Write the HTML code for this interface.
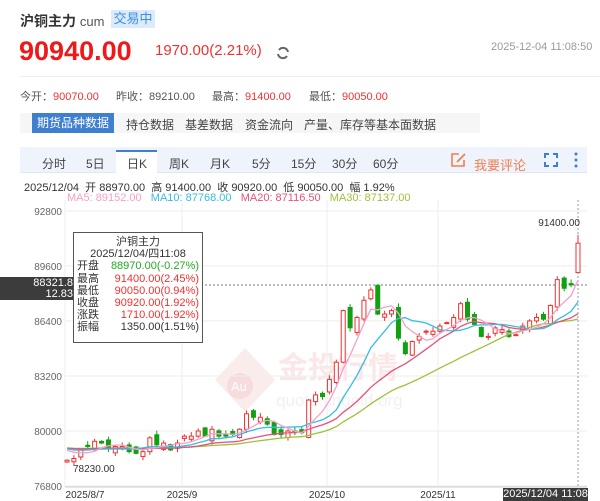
<!DOCTYPE html>
<html><head><meta charset="utf-8"><style>
*{margin:0;padding:0;box-sizing:border-box}
body{width:600px;height:501px;background:#fff;font-family:"Liberation Sans","Noto Sans CJK SC",sans-serif;position:relative;overflow:hidden;color:#333}
.a{position:absolute;white-space:nowrap}
.r{color:#f23030}
</style></head><body>
<div class="a" style="left:20px;top:11px;font-size:14px;font-weight:bold;color:#333">沪铜主力 <span style="font-weight:normal;color:#555;font-size:13px">cum</span></div>
<div class="a" style="left:111px;top:10px;width:44px;height:18px;background:#dcebf9;color:#3a8ee6;font-size:13px;text-align:center;line-height:18px">交易中</div>
<div class="a r" style="left:19px;top:36px;font-size:27px;font-weight:bold;color:#f01818">90940.00</div>
<div class="a r" style="left:155px;top:42px;font-size:15px">1970.00(2.21%)</div>
<svg class="a" style="left:276px;top:46px" width="14" height="14" viewBox="0 0 14 14"><path d="M12 6A5 5 0 0 0 3 4M2 8a5 5 0 0 0 9 2" fill="none" stroke="#666" stroke-width="2"/></svg>
<div class="a" style="left:491px;top:41px;font-size:11px;color:#999">2025-12-04 11:08:50</div>
<div class="a" style="left:20px;top:76px;width:580px;height:1px;background:#eee"></div>
<div class="a" style="left:20px;top:88px;font-size:11px;color:#555">今开：<span class="r">90070.00</span></div>
<div class="a" style="left:116px;top:88px;font-size:11px;color:#555">昨收：89210.00</div>
<div class="a" style="left:212px;top:88px;font-size:11px;color:#555">最高：<span class="r">91400.00</span></div>
<div class="a" style="left:309px;top:88px;font-size:11px;color:#555">最低：<span class="r">90050.00</span></div>
<div class="a" style="left:20px;top:113px;width:460px;height:20px;background:#f6f6f6"></div>
<div class="a" style="left:32px;top:113px;width:82px;height:20px;background:#3f7fcf;color:#fff;font-size:12px;line-height:20px;text-align:center">期货品种数据</div>
<div class="a" style="left:126px;top:116px;font-size:12px;color:#444">持仓数据</div>
<div class="a" style="left:185px;top:116px;font-size:12px;color:#444">基差数据</div>
<div class="a" style="left:245px;top:116px;font-size:12px;color:#444">资金流向</div>
<div class="a" style="left:304px;top:116px;font-size:12px;color:#444">产量、库存等基本面数据</div>
<div class="a" style="left:20px;top:147px;width:567px;height:26px;background:#eef3fc;border-bottom:1px solid #e2e8f2"></div>
<div class="a" style="left:116px;top:150px;width:41px;height:24px;background:#fff;border-top:2px solid #3f7fcf"></div>
<div class="a" style="top:155px;left:0;font-size:12px;color:#444;width:600px;height:16px">
<span class="a" style="left:42px">分时</span><span class="a" style="left:86px">5日</span><span class="a" style="left:127px">日K</span><span class="a" style="left:169px">周K</span><span class="a" style="left:210px">月K</span><span class="a" style="left:252px">5分</span><span class="a" style="left:291px">15分</span><span class="a" style="left:332px">30分</span><span class="a" style="left:373px">60分</span><span class="a" style="left:474px;color:#f08050;font-size:13px">我要评论</span></div>
<svg class="a" style="left:450px;top:152px" width="18" height="16" viewBox="0 0 18 16"><path d="M9 2H2v12h12V8" fill="none" stroke="#f08050" stroke-width="1.6"/><path d="M7 10l8-8" stroke="#f08050" stroke-width="1.8"/></svg>
<svg class="a" style="left:544px;top:153px" width="14" height="14" viewBox="0 0 14 14"><path d="M1 5V1h4M9 1h4v4M13 9v4H9M5 13H1V9" fill="none" stroke="#3f7fcf" stroke-width="2"/></svg>
<svg class="a" style="left:574px;top:152px" width="4" height="16"><circle cx="2" cy="2" r="1.5" fill="#3f7fcf"/><circle cx="2" cy="8" r="1.5" fill="#3f7fcf"/><circle cx="2" cy="14" r="1.5" fill="#3f7fcf"/></svg>
<div class="a" style="left:24px;top:179px;font-size:11px;color:#333">2025/12/04&nbsp; 开 88970.00&nbsp; 高 91400.00&nbsp; 收 90920.00&nbsp; 低 90050.00&nbsp; 幅 1.92%</div>
<div class="a" style="left:67px;top:192px;font-size:11px"><span style="color:#f5a0c8">MA5: 89152.00</span>&nbsp;&nbsp; <span style="color:#36bde0">MA10: 87768.00</span>&nbsp;&nbsp; <span style="color:#e8507a">MA20: 87116.50</span>&nbsp;&nbsp; <span style="color:#9cc23a">MA30: 87137.00</span></div>
<svg id="ch" class="a" style="left:0;top:200px" width="600" height="301"></svg>
<div class="a" style="left:0;top:277px;width:73px;height:23px;background:#3c3c3c;color:#fff;font-size:11px;text-align:right;line-height:11px;padding-top:1px;padding-right:0">88321.8<br>12.83</div>
<div class="a" style="left:73px;top:232px;width:130px;height:111px;background:rgba(255,255,255,.95);border:1px solid #555;font-size:11px;line-height:12.2px;padding:3px 3px;color:#333">
<div style="text-align:center">沪铜主力</div><div style="text-align:center">2025/12/04/四11:08</div>
<div>开盘<span style="float:right;color:#22aa22">88970.00(-0.27%)</span></div>
<div>最高<span class="r" style="float:right">91400.00(2.45%)</span></div>
<div>最低<span class="r" style="float:right">90050.00(0.94%)</span></div>
<div>收盘<span class="r" style="float:right">90920.00(1.92%)</span></div>
<div>涨跌<span class="r" style="float:right">1710.00(1.92%)</span></div>
<div>振幅<span style="float:right">1350.00(1.51%)</span></div></div>
<div class="a" style="left:503px;top:488px;width:85px;height:13px;background:#3c3c3c;color:#fff;font-size:11px;line-height:13px;text-align:center">2025/12/04 11:08</div>
<script>
var s='',Y=function(p){return 231-(p-80000)*0.0172};
var lv=[92800,89600,86400,83200,80000,76800];
s+='<text x="312" y="175" font-size="30" fill="#f9e6e6" font-weight="bold" text-anchor="middle" transform="translate(0,0)"></text>';
s+='<path d="M215 180l30-32 30 32-30 32z" fill="#fbecec"/><circle cx="240" cy="186" r="13" fill="#f6dcdc"/><text x="231" y="191" font-size="13" fill="#fff">Au</text>';
s+='<text x="278" y="178" font-size="30" fill="#fae8e8" font-weight="bold">金投行情</text><text x="276" y="206" font-size="17" fill="#f4f0f0">quote.cngold.org</text>';
lv.forEach(function(p){var y=Y(p);s+='<line x1="65" x2="587" y1="'+y+'" y2="'+y+'" stroke="#eee"/><text x="62" y="'+(y+4)+'" font-size="10" fill="#666" text-anchor="end">'+p+'</text>';});
[[65,'2025/8/7',85],[182,'2025/9',182],[327,'2025/10',327],[438,'2025/11',438]].forEach(function(d){s+='<line x1="'+d[0]+'" x2="'+d[0]+'" y1="0" y2="287" stroke="#eee"/><text x="'+d[2]+'" y="298" font-size="10" fill="#333" text-anchor="middle">'+d[1]+'</text>';});
s+='<line x1="65" x2="587" y1="287" y2="287" stroke="#ccc"/>';
s+='<line x1="65" x2="587" y1="85" y2="85" stroke="#777" stroke-dasharray="2,2"/><line x1="578" x2="578" y1="0" y2="287" stroke="#999" stroke-dasharray="2,2"/>';
var c=[78300,78400,78900,79100,79400,79300,79000,79100,79100,78800,78700,78800,79600,79200,79300,78900,79300,79700,79700,80000,79700,80100,79700,79700,79800,80100,81000,80800,80800,80400,79800,79800,80000,79900,79900,81800,82100,82000,83000,84000,87000,86000,86600,87600,88200,86800,86800,87000,85400,84500,85200,85500,85800,85800,86100,86300,86600,87400,86500,86200,85500,85500,86000,85900,85500,85600,86100,86400,86600,86500,87300,88800,88300,88500,90920];
var pre=[];for(var i=0;i<30;i++)pre.push(79100-(i%3)*60);var all=pre.concat(c);
var N=c.length,sp=(578-67)/(N-1),X=function(i){return 67+i*sp};
function ma(n,col){var pts=[];for(var i=0;i<N;i++){var k=i+30,t=0;for(var j=0;j<n;j++)t+=all[k-j];pts.push(X(i).toFixed(1)+','+Y(t/n).toFixed(1));}s+='<polyline points="'+pts.join(' ')+'" fill="none" stroke="'+col+'" stroke-width="1.3"/>';}
for(var i=0;i<N;i++){var o=i?c[i-1]+((i*37)%7-3)*90:78200,cl=c[i];var hi=Math.max(o,cl)+60+(i*53%5)*45,lo=Math.min(o,cl)-60-(i*29%5)*40;if(i==N-1){hi=91400;lo=90050;o=89210;}
var up=cl>=o,col=up?'#f03030':'#10a010',x=X(i),yt=Y(Math.max(o,cl)),yb=Y(Math.min(o,cl)),h=Math.max(1,yb-yt);
s+='<line x1="'+x+'" x2="'+x+'" y1="'+Y(hi)+'" y2="'+Y(lo)+'" stroke="'+col+'"/>';
s+='<rect x="'+(x-2)+'" y="'+yt+'" width="4" height="'+h+'" fill="'+(up?'#fff':col)+'" stroke="'+col+'" stroke-width="1"/>';}
ma(30,'#9cc23a');ma(20,'#e8507a');ma(10,'#36bde0');ma(5,'#f5a0c8');
s+='<text x="580" y="26" font-size="10" fill="#333" text-anchor="end">91400.00</text><text x="73" y="272" font-size="10" fill="#333">78230.00</text>';
document.getElementById('ch').innerHTML=s;
</script>
</body></html>
